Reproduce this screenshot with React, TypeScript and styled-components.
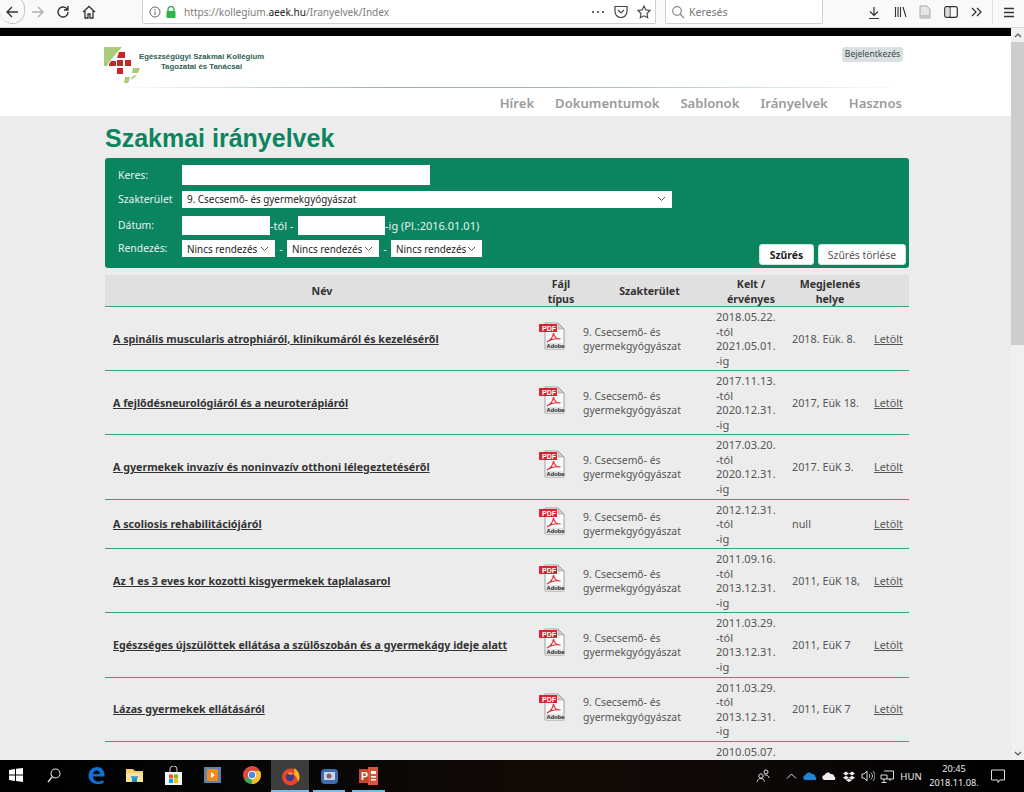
import React from "react";
import styled, { createGlobalStyle } from "styled-components";

const Global = createGlobalStyle`
  html, body { margin: 0; padding: 0; height: 100%; overflow: hidden; background: #ececec; }
  body { font-family: "Noto Sans", "Open Sans", "Liberation Sans", sans-serif; color: #333; }
  * { box-sizing: border-box; }
`;

const Screen = styled.div`
  width: 1024px; height: 792px; display: flex; flex-direction: column; overflow: hidden;
`;

/* ---------- browser toolbar ---------- */
const Toolbar = styled.div`
  height: 28px; flex: none; display: flex; align-items: flex-start; background: #f9f9fa;
  border-bottom: 1px solid #d8d8d8;
`;
const NavGroup = styled.div`
  width: 142px; height: 24px; flex: none; display: flex; align-items: center;
`;
const BackCircle = styled.span`
  width: 25px; height: 27px; margin-top: -3px; flex: none; display: flex; align-items: center; justify-content: center;
  border: 1px solid #c4c4c4; border-left: none; border-top: none; border-radius: 0 0 14px 14px / 0 0 14px 14px;
  border-top-right-radius: 12px; background: #f9f9fa; padding-top: 3px;
`;
const ToolSlot = styled.span<{ $w: number }>`
  width: ${(p) => p.$w}px; height: 24px; flex: none; display: flex; align-items: center; justify-content: center;
`;
const UrlBar = styled.div`
  width: 514px; height: 24px; flex: none; display: flex; align-items: center; background: #fff;
  border: 1px solid #cfcfcf; border-top: none; border-radius: 0 0 2px 2px; padding-left: 4px;
`;
const UrlText = styled.span`
  font-size: 10.1px; color: #7d7d7d; margin-left: 5px; flex: 1; white-space: nowrap;
  b { font-weight: 400; color: #222; }
`;
const SearchBar = styled.div`
  width: 158px; height: 24px; margin-left: 9px; flex: none; display: flex; align-items: center; gap: 4px; padding-left: 5px;
  background: #fff; border: 1px solid #cfcfcf; border-top: none; border-radius: 0 0 2px 2px;
  font-size: 10.5px; color: #777;
`;
const RightTools = styled.div`
  margin-left: 38px; display: flex; align-items: center; height: 24px;
`;
const ToolDivider = styled.span`
  width: 1px; height: 24px; background: #e0e0e0; margin: 0 5px 0 2px;
`;

/* ---------- page shell ---------- */
const Viewport = styled.div`
  flex: 1; min-height: 0; display: flex; overflow: hidden;
`;
const PageArea = styled.div`
  flex: 1; min-width: 0; display: flex; flex-direction: column; overflow: hidden; background: #ececec;
`;
const BlackBar = styled.div`
  height: 8px; flex: none; background: #000;
`;
const Scrollbar = styled.div`
  width: 13px; flex: none; background: #f0f0f0; display: flex; flex-direction: column; align-items: center; position: relative;
`;
const ScrollArrow = styled.span`
  height: 14px; flex: none; display: flex; align-items: center; justify-content: center; width: 100%;
`;
const ScrollThumb = styled.span`
  width: 100%; height: 303px; background: #cdcdcd; flex: none;
`;
const ScrollSpacer = styled.span`
  flex: 1;
`;

/* ---------- site header ---------- */
const Header = styled.header`
  height: 80px; flex: none; background: #fff; position: relative; padding: 11px 108px 0 104px;
`;
const HeaderTop = styled.div`
  display: flex; justify-content: space-between; align-items: flex-start; height: 40px;
`;
const Brand = styled.div`
  display: flex; align-items: flex-start; gap: 0;
  svg { flex: none; }
`;
const BrandText = styled.div`
  width: 125px; margin-left: -1px; margin-top: 5px; text-align: center; font-family: "Liberation Sans", sans-serif;
  font-weight: 700; font-size: 7.8px; line-height: 10px; color: #2f6152; white-space: nowrap;
`;
const LoginButton = styled.span`
  background: #d8e0e2; border-radius: 3px; font-size: 8.6px; line-height: 15px; height: 15px;
  color: #444; width: 61px; flex: none; text-align: center; white-space: nowrap;
`;
const HeaderRule = styled.div`
  height: 1px; margin-left: 11px; margin-right: -4px;
  background: linear-gradient(90deg, #fff 0%, #8fb7a2 35%, #9dc2ad 60%, #fff 100%);
`;
const Nav = styled.nav`
  display: flex; justify-content: flex-end; gap: 21px; margin-top: 5px; margin-right: 1px;
`;
const NavLink = styled.a`
  font-size: 13.1px; font-weight: 600; line-height: 20px; color: #9a9a9a; white-space: nowrap;
`;

/* ---------- main ---------- */
const Main = styled.main`
  flex: 1; min-height: 0; overflow: hidden; padding: 0 102px 0 105px;
`;
const Title = styled.h1`
  margin: 7px 0 0; height: 35px; font-family: "Liberation Sans", sans-serif; font-weight: 700; font-size: 25px;
  line-height: 31px; color: #0b8560; white-space: nowrap;
`;
const FilterPanel = styled.form`
  height: 110px; background: #0a8560; border-radius: 3px; padding: 7px 3px 3px 13px; display: flex; flex-direction: column; gap: 3px;
  color: #e6f3ee; font-size: 10.4px;
`;
const FilterRow = styled.div<{ $h: number }>`
  display: flex; align-items: center; height: ${(p) => p.$h}px; flex: none;
`;
const SortRow = styled(FilterRow)`
  align-items: flex-start; flex: 1;
`;
const FilterLabel = styled.label`
  width: 64px; flex: none; line-height: 17px; white-space: nowrap;
`;
const TextBox = styled.input<{ $w: number; $h?: number }>`
  width: ${(p) => p.$w}px; height: ${(p) => p.$h ?? 19}px; border: none; background: #fff; padding: 0; flex: none;
`;
const chevron = `url("data:image/svg+xml,%3Csvg xmlns='http://www.w3.org/2000/svg' width='9' height='6'%3E%3Cpath d='M1 1l3.5 3.5L8 1' fill='none' stroke='%23555' stroke-width='1'/%3E%3C/svg%3E")`;
const Select = styled.select<{ $w: number }>`
  appearance: none; width: ${(p) => p.$w}px; height: 17px; border: none; border-radius: 0; padding: 0 0 0 5px; flex: none;
  font-family: inherit; font-size: 9.9px; color: #222; background: #fff ${chevron} no-repeat right 6px center;
`;
const Sep = styled.span`
  width: 12px; text-align: center; flex: none; font-size: 11px; line-height: 17px;
`;
const RangeText = styled.span`
  font-size: 11px; white-space: nowrap;
`;
const FromText = styled(RangeText)`
  width: 28px; flex: none;
`;
const ButtonGroup = styled.div`
  margin-left: auto; margin-top: 4px; display: flex; gap: 4px;
`;
const Btn = styled.button<{ $primary?: boolean; $w: number }>`
  width: ${(p) => p.$w}px; height: 21px; padding: 0; background: #fff; border: 1px solid #cfe6dd; border-radius: 3px;
  font-family: inherit; font-size: 10.4px; font-weight: ${(p) => (p.$primary ? 700 : 400)}; color: ${(p) => (p.$primary ? "#222" : "#555")};
`;

/* ---------- table ---------- */
const cols = "434px 44px 133px 76px 82px 35px";
const TableHead = styled.div`
  margin-top: 7px; display: grid; grid-template-columns: ${cols}; height: 32px; background: #e0e0e0; border-bottom: 1px solid #3fa080;
  align-items: center; padding-top: 2px;
`;
const Th = styled.div<{ $pr?: number }>`
  text-align: center; font-weight: 700; font-size: 10.6px; line-height: 14.5px; color: #333; padding-right: ${(p) => p.$pr ?? 0}px;
`;
const Row = styled.div`
  display: grid; grid-template-columns: ${cols}; align-items: center; padding: 3px 0 2px; border-bottom: 1px solid #3fa080;
  font-size: 10.8px; line-height: 14.55px; color: #555;
`;
const ClippedRow = styled(Row)`
  border-bottom: none; min-height: 64px;
`;
const NameLink = styled.a`
  padding-left: 8px; font-weight: 700; color: #333; text-decoration: underline; font-size: 10.7px; white-space: nowrap;
`;
const FieldCell = styled.div`
  font-size: 10.4px;
`;
const DateCell = styled.div`
  font-size: 11.1px; color: #555;
`;
const TopDateCell = styled(DateCell)`
  grid-column: 4; grid-row: 1; align-self: start;
`;
const Download = styled.a`
  color: #555; text-decoration: underline;
`;
const IconCell = styled.div`
  display: flex; height: 29px; margin-top: -5px; grid-column: 2; grid-row: 1;
`;
const ClippedIconCell = styled(IconCell)`
  margin-top: 0;
`;

/* ---------- taskbar ---------- */
const Taskbar = styled.div`
  height: 32px; flex: none; display: flex; align-items: center; color: #e8e8e8;
  background: linear-gradient(90deg, #000 0%, #060606 25%, #120a06 55%, #0c0807 75%, #000 100%);
`;
const TaskSlot = styled.div<{ $w: number; $active?: boolean; $open?: boolean }>`
  width: ${(p) => p.$w}px; height: 32px; flex: none; display: flex; align-items: center; justify-content: center;
  background: ${(p) => (p.$active ? "#3d3d3d" : "transparent")};
  border-bottom: 2px solid ${(p) => (p.$open ? "#79bce9" : "transparent")};
  padding-top: ${(p) => (p.$open ? 2 : 0)}px;
`;
const TraySpacer = styled.div`
  flex: 1;
`;
const TraySlot = styled.div<{ $w: number }>`
  width: ${(p) => p.$w}px; height: 32px; flex: none; display: flex; align-items: center; justify-content: center;
`;
const LangText = styled.span`
  font-size: 9.6px; color: #e8e8e8;
`;
const Clock = styled.div`
  width: 60px; text-align: center; font-size: 9.2px; line-height: 14px; color: #eaeaea; flex: none; white-space: nowrap;
`;

/* ---------- icons ---------- */
const Ico = ({ w = 16, h = 16, children, vb }: { w?: number; h?: number; vb?: string; children: React.ReactNode }) => (
  <svg width={w} height={h} viewBox={vb ?? `0 0 ${w} ${h}`} fill="none">{children}</svg>
);

const PdfIcon = () => (
  <svg width="27" height="28" viewBox="0 0 27 28">
    <path d="M6 1h13l6 6v20H6z" fill="#fafafa" stroke="#8c8c8c" strokeWidth="0.8" />
    <path d="M19 1l6 6h-6z" fill="#cfcfcf" stroke="#8c8c8c" strokeWidth="0.5" />
    <path d="M0 2h18v8H0z" fill="#d9232e" />
    <text x="3" y="8.500" fontFamily="Liberation Sans, sans-serif" fontSize="7" fontWeight="700" fill="#fff">PDF</text>
    <path d="M8 20c3-1 6-5 6.500-9 .5 3.500 3 6 7 6-4-.5-10 .5-13.500 3z" fill="none" stroke="#d9232e" strokeWidth="1.100" />
    <rect x="6.500" y="21" width="18" height="6" fill="#e2e2e2" />
    <text x="7.500" y="26" fontFamily="Liberation Sans, sans-serif" fontSize="5.800" fontWeight="700" fill="#222">Adobe</text>
  </svg>
);

/* only the top edge of the last PDF icon is visible above the taskbar */
const PdfIconTop = () => (
  <svg width="27" height="28" viewBox="0 0 27 28">
    <path d="M6 1h13l6 6v20H6z" fill="#fafafa" stroke="#8c8c8c" strokeWidth="0.8" />
    <path d="M0 2h18v8H0z" fill="#d9232e" />
  </svg>
);

const LogoMark = () => (
  <svg width="36" height="37" viewBox="0 0 36 37">
    <path d="M0 0h18L5 15 3 19H0z" fill="#a9cb7a" />
    <path d="M15 5h6v6h-8z" fill="#c8242c" />
    <path d="M5 17l2-3h5v5H5z" fill="#c8242c" />
    <rect x="13" y="13" width="6" height="6" fill="#c8242c" />
    <rect x="21" y="13" width="6" height="6" fill="#c8242c" />
    <rect x="13" y="21" width="6" height="6" fill="#c8242c" />
    <path d="M29 21h7l-2 5h-6z" fill="#a9cb7a" />
    <path d="M33 27l-2 3-4 3 1-3z" fill="#a9cb7a" />
    <path d="M21 30h5l-1 4-1 2h-4z" fill="#a9cb7a" />
  </svg>
);

const ChromeIcon = () => (
  <svg width="18" height="18" viewBox="0 0 18 18">
    <circle cx="9" cy="9" r="9" fill="#dd4b3e" />
    <path d="M9 9L1.200 13.500A9 9 0 0 0 9 18c1 0 2-.2 3-.5z" fill="#3aa757" />
    <path d="M9 9l-.1 9A9 9 0 0 0 17 5H9z" fill="#f6c02f" />
    <circle cx="9" cy="9" r="4.200" fill="#fff" />
    <circle cx="9" cy="9" r="3.200" fill="#4a89e8" />
  </svg>
);

const FirefoxIcon = () => (
  <svg width="19" height="19" viewBox="0 0 19 19">
    <circle cx="9.500" cy="10" r="8.500" fill="#e8452c" />
    <path d="M13 1c3.500 2 5.500 5 5.500 9 0 2-.5 3.500-1.500 5-.3-3-1.500-5.500-4-7.500.5-2.500.5-4.500 0-6.500z" fill="#fcb524" />
    <circle cx="9" cy="10" r="4" fill="#3c3a8c" />
    <path d="M6 6c2-1.500 5-1 6.500 1l-3 1-3.500-2z" fill="#ff9a1f" />
  </svg>
);

const PptIcon = () => (
  <svg width="19" height="18" viewBox="0 0 19 18">
    <rect x="0" y="2" width="12" height="14" fill="#c8452a" />
    <rect x="9" y="0" width="10" height="18" fill="#d6573a" />
    <rect x="12" y="4" width="5" height="3" fill="#fff" />
    <rect x="12" y="9" width="5" height="1.500" fill="#fff" />
    <rect x="12" y="12" width="5" height="1.500" fill="#fff" />
    <text x="2" y="13" fontFamily="Liberation Sans, sans-serif" fontSize="10.500" fontWeight="700" fill="#fff">P</text>
  </svg>
);

type Doc = { name: string; from: string; to: string; place: string };
const docs: Doc[] = [
  { name: "A spinális muscularis atrophiáról, klinikumáról és kezeléséről", from: "2018.05.22.", to: "2021.05.01.", place: "2018. Eük. 8." },
  { name: "A fejlődésneurológiáról és a neuroterápiáról", from: "2017.11.13.", to: "2020.12.31.", place: "2017, Eük 18." },
  { name: "A gyermekek invazív és noninvazív otthoni lélegeztetéséről", from: "2017.03.20.", to: "2020.12.31.", place: "2017. EüK 3." },
  { name: "A scoliosis rehabilitációjáról", from: "2012.12.31.", to: "", place: "null" },
  { name: "Az 1 es 3 eves kor kozotti kisgyermekek taplalasarol", from: "2011.09.16.", to: "2013.12.31.", place: "2011, EüK 18," },
  { name: "Egészséges újszülöttek ellátása a szülőszobán és a gyermekágy ideje alatt", from: "2011.03.29.", to: "2013.12.31.", place: "2011, EüK 7" },
  { name: "Lázas gyermekek ellátásáról", from: "2011.03.29.", to: "2013.12.31.", place: "2011, EüK 7" },
];

const DocRow = ({ d }: { d: Doc }) => (
  <Row>
    <NameLink>{d.name}</NameLink>
    <IconCell><PdfIcon /></IconCell>
    <FieldCell>9. Csecsemő- és<br />gyermekgyógyászat</FieldCell>
    <DateCell>
      {d.from}<br />-tól<br />{d.to ? <>{d.to}<br />-ig</> : "-ig"}
    </DateCell>
    <div>{d.place}</div>
    <Download>Letölt</Download>
  </Row>
);

export default function App() {
  return (
    <Screen>
      <Global />
      <Toolbar>
        <NavGroup>
          <BackCircle>
            <Ico w={14} h={14}><path d="M13 7H2M7 2L2 7l5 5" stroke="#333" strokeWidth="1.400" /></Ico>
          </BackCircle>
          <ToolSlot $w={26}><Ico w={14} h={14}><path d="M1 7h11M7 2l5 5-5 5" stroke="#adadad" strokeWidth="1.300" /></Ico></ToolSlot>
          <ToolSlot $w={24}><Ico w={14} h={14}><path d="M12 7a5 5 0 1 1-1.600-3.700L12 5M12 1v4H8" stroke="#333" strokeWidth="1.400" /></Ico></ToolSlot>
          <ToolSlot $w={28}><Ico w={14} h={14}><path d="M1 7l6-5.500L13 7M3 6v7h3V9h2v4h3V6" stroke="#333" strokeWidth="1.300" /></Ico></ToolSlot>
        </NavGroup>
        <UrlBar>
          <ToolSlot $w={16}><Ico w={12} h={12}><circle cx="6" cy="6" r="5" stroke="#666" /><path d="M6 5.500V9M6 3v1.300" stroke="#666" /></Ico></ToolSlot>
          <ToolSlot $w={16}><Ico w={12} h={12}><path d="M3 5V3.500a3 3 0 0 1 6 0V5" stroke="#2fb344" strokeWidth="1.400" /><rect x="1.500" y="5" width="9" height="7" rx="1" fill="#2fb344" /></Ico></ToolSlot>
          <UrlText>https://kollegium.<b>aeek.hu</b>/Iranyelvek/Index</UrlText>
          <ToolSlot $w={22}><Ico w={14} h={4}><circle cx="2" cy="2" r="1.100" fill="#444" /><circle cx="7" cy="2" r="1.100" fill="#444" /><circle cx="12" cy="2" r="1.100" fill="#444" /></Ico></ToolSlot>
          <ToolSlot $w={24}><Ico w={14} h={13}><path d="M1 1.500h12v5a6 6 0 0 1-12 0z" stroke="#444" strokeWidth="1.200" /><path d="M4 5l3 3 3-3" stroke="#444" strokeWidth="1.200" /></Ico></ToolSlot>
          <ToolSlot $w={22}><Ico w={14} h={14}><path d="M7 1l1.900 3.900 4.100.6-3 3 .7 4.300L7 10.800l-3.700 2 .7-4.300-3-3 4.100-.6z" stroke="#444" strokeWidth="1.100" /></Ico></ToolSlot>
        </UrlBar>
        <SearchBar>
          <Ico w={14} h={14}><circle cx="6" cy="6" r="4.300" stroke="#888" strokeWidth="1.200" /><path d="M9 9l4 4" stroke="#888" strokeWidth="1.300" /></Ico>
          Keresés
        </SearchBar>
        <RightTools>
          <ToolSlot $w={26}><Ico w={12} h={13}><path d="M6 1v8M2 5.500L6 9.500l4-4M1 12.500h10" stroke="#333" strokeWidth="1.200" /></Ico></ToolSlot>
          <ToolSlot $w={26}><Ico w={13} h={12}><path d="M1.500 1v10M4 1v10M6.500 1v10M9 1l3 10" stroke="#333" strokeWidth="1.100" /></Ico></ToolSlot>
          <ToolSlot $w={24}><Ico w={12} h={14}><path d="M1 1h7l3 3v9H1z" fill="#e4e4e4" stroke="#aaa" /><rect x="1" y="10" width="10" height="3" fill="#c4c4c4" /></Ico></ToolSlot>
          <ToolSlot $w={27}><Ico w={14} h={12}><rect x=".7" y=".7" width="12.600" height="10.600" rx="2" stroke="#333" strokeWidth="1.200" /><path d="M6 1v10" stroke="#333" strokeWidth="1.200" /><rect x="2" y="2" width="3.500" height="8" fill="#ddd" /></Ico></ToolSlot>
          <ToolSlot $w={26}><Ico w={12} h={10}><path d="M1 1l4 4-4 4M6 1l4 4-4 4" stroke="#333" strokeWidth="1.300" /></Ico></ToolSlot>
          <ToolDivider />
          <ToolSlot $w={22}><Ico w={12} h={11}><path d="M1 1.500h10M1 5.500h10M1 9.500h10" stroke="#333" strokeWidth="1.300" /></Ico></ToolSlot>
        </RightTools>
      </Toolbar>

      <Viewport>
        <PageArea>
          <BlackBar />
          <Header>
            <HeaderTop>
              <Brand>
                <LogoMark />
                <BrandText>Egészségügyi Szakmai Kollégium<br />Tagozatai és Tanácsai</BrandText>
              </Brand>
              <LoginButton>Bejelentkezés</LoginButton>
            </HeaderTop>
            <HeaderRule />
            <Nav>
              <NavLink>Hírek</NavLink>
              <NavLink>Dokumentumok</NavLink>
              <NavLink>Sablonok</NavLink>
              <NavLink>Irányelvek</NavLink>
              <NavLink>Hasznos</NavLink>
            </Nav>
          </Header>
          <Main>
            <Title>Szakmai irányelvek</Title>
            <FilterPanel>
              <FilterRow $h={20}>
                <FilterLabel>Keres:</FilterLabel>
                <TextBox $w={248} $h={20} />
              </FilterRow>
              <FilterRow $h={22}>
                <FilterLabel>Szakterület</FilterLabel>
                <Select $w={490} defaultValue="9"><option value="9">9. Csecsemő- és gyermekgyógyászat</option></Select>
              </FilterRow>
              <FilterRow $h={24}>
                <FilterLabel>Dátum:</FilterLabel>
                <TextBox $w={88} />
                <FromText>-tól -</FromText>
                <TextBox $w={87} />
                <RangeText>-ig (Pl.:2016.01.01)</RangeText>
              </FilterRow>
              <SortRow $h={25}>
                <FilterLabel>Rendezés:</FilterLabel>
                <Select $w={93}><option>Nincs rendezés</option></Select>
                <Sep>-</Sep>
                <Select $w={92}><option>Nincs rendezés</option></Select>
                <Sep>-</Sep>
                <Select $w={91}><option>Nincs rendezés</option></Select>
                <ButtonGroup>
                  <Btn type="button" $primary $w={55}>Szűrés</Btn>
                  <Btn type="button" $w={88}>Szűrés törlése</Btn>
                </ButtonGroup>
              </SortRow>
            </FilterPanel>
            <TableHead>
              <Th>Név</Th>
              <Th>Fájl<br />típus</Th>
              <Th>Szakterület</Th>
              <Th $pr={6}>Kelt /<br />érvényes</Th>
              <Th $pr={6}>Megjelenés<br />helye</Th>
              <Th />
            </TableHead>
            {docs.map((d) => <DocRow key={d.name} d={d} />)}
            <ClippedRow>
              <ClippedIconCell><PdfIconTop /></ClippedIconCell>
              <TopDateCell>2010.05.07.</TopDateCell>
            </ClippedRow>
          </Main>
        </PageArea>
        <Scrollbar>
          <ScrollArrow><Ico w={8} h={5}><path d="M1 4l3-3 3 3" stroke="#555" strokeWidth="1.200" /></Ico></ScrollArrow>
          <ScrollThumb />
          <ScrollSpacer />
          <ScrollArrow><Ico w={8} h={5}><path d="M1 1l3 3 3-3" stroke="#555" strokeWidth="1.200" /></Ico></ScrollArrow>
        </Scrollbar>
      </Viewport>

      <Taskbar>
        <TaskSlot $w={31}><Ico w={14} h={14}><path d="M0 2l6-1v5.500H0zM7 .8L14 0v6.500H7zM0 7.500h6V13l-6-1zM7 7.500h7V14l-7-1z" fill="#fff" /></Ico></TaskSlot>
        <TaskSlot $w={46}><Ico w={14} h={15}><circle cx="8.500" cy="5.500" r="4.500" stroke="#ddd" strokeWidth="1.100" /><path d="M5 9l-4 5" stroke="#ddd" strokeWidth="1.400" /></Ico></TaskSlot>
        <TaskSlot $w={38}><Ico w={17} h={17}><path d="M16.500 9.500H5c.2 3 2.500 5 5.500 5 2 0 3.800-.6 5-1.500v3c-1.500.8-3.400 1.200-5.500 1.200C4.500 17 .5 13.800.5 8.500.5 3.500 4.500 0 9 0c4.800 0 7.800 3.400 7.500 9.500zM5.200 7h6.600c0-2-1.200-3.500-3.100-3.500S5.500 5 5.200 7z" fill="#0f6fd4" /></Ico></TaskSlot>
        <TaskSlot $w={39}><Ico w={17} h={15}><path d="M0 1h7l2 2h8v11H0z" fill="#f3cf6a" /><rect x="0" y="5" width="17" height="9" fill="#fbe29a" /><rect x="5" y="8" width="7" height="2" fill="#3fa9d8" /><rect x="6" y="10" width="5" height="4" fill="#2a8bc4" /></Ico></TaskSlot>
        <TaskSlot $w={39}><Ico w={19} h={19}><path d="M1 6h17v13H1z" fill="#f4f4f4" /><path d="M6 6V3a3.500 3 0 0 1 7 0v3" stroke="#ccc" /><rect x="5" y="8.500" width="4" height="4" fill="#f25022" /><rect x="10" y="8.500" width="4" height="4" fill="#7fba00" /><rect x="5" y="13" width="4" height="4" fill="#00a4ef" /><rect x="10" y="13" width="4" height="4" fill="#ffb900" /></Ico></TaskSlot>
        <TaskSlot $w={39}><Ico w={17} h={16}><rect x="0" y="0" width="17" height="16" fill="#5d86a8" /><rect x="3" y="2" width="11" height="12" fill="#f28a1e" /><path d="M7 5l4 3-4 3z" fill="#fff" /></Ico></TaskSlot>
        <TaskSlot $w={39}><ChromeIcon /></TaskSlot>
        <TaskSlot $w={38} $active $open><FirefoxIcon /></TaskSlot>
        <TaskSlot $w={4} />
        <TaskSlot $w={32} $open><Ico w={17} h={17}><rect x="0" y="1" width="17" height="15" rx="4" fill="#3d6cb0" /><rect x="3" y="4" width="11" height="8" fill="#c9d6ea" /><circle cx="8" cy="8" r="2.500" fill="#8a5a68" /></Ico></TaskSlot>
        <TaskSlot $w={7} />
        <TaskSlot $w={33} $open><PptIcon /></TaskSlot>
        <TraySpacer />
        <TraySlot $w={26}><Ico w={14} h={14}><circle cx="5" cy="7" r="2.200" stroke="#ddd" /><path d="M1 13c.5-2.500 2-3.500 4-3.500s3 1 3.500 3" stroke="#ddd" /><circle cx="10" cy="3" r="2" stroke="#ddd" /><path d="M8.500 6c2-.5 4 .5 4.500 3" stroke="#ddd" /></Ico></TraySlot>
        <TraySlot $w={5} />
        <TraySlot $w={20}><Ico w={11} h={6}><path d="M1 5.500l4.500-4.500 4.500 4.500" stroke="#ddd" /></Ico></TraySlot>
        <TraySlot $w={18}><Ico w={14} h={8}><path d="M3 8a2.500 2.500 0 0 1-.5-5C3.500.5 7-.5 8.500 2 11 1.500 12.500 3 12 4.500c1.500 0 2 3.500 0 3.500z" fill="#1e88d6" /></Ico></TraySlot>
        <TraySlot $w={20}><Ico w={14} h={8}><path d="M3 8a2.500 2.500 0 0 1-.5-5C3.500.5 7-.5 8.500 2 11 1.500 12.500 3 12 4.500c1.500 0 2 3.500 0 3.500z" fill="#eee" /></Ico></TraySlot>
        <TraySlot $w={20}><Ico w={12} h={11}><path d="M3 .5L6 2.500 3 4.500 0 2.500zM9 .5l3 2-3 2-3-2zM3 4.800l3 2-3 2-3-2zM9 4.800l3 2-3 2-3-2zM3 9.300l3-1.800 3 1.800-3 1.700z" fill="#eee" /></Ico></TraySlot>
        <TraySlot $w={18}><Ico w={14} h={12}><path d="M1 4h2l3-3v10L3 8H1z" stroke="#ddd" /><path d="M8 4c1 1 1 3 0 4M10 2.500c2 2 2 5 0 7M12 1c2.500 3 2.500 7 0 10" stroke="#ddd" strokeWidth=".8" /></Ico></TraySlot>
        <TraySlot $w={20}><Ico w={14} h={13}><path d="M4 1h9.500v8H7M1 5h6v4H1zM4 9v3M1.500 12.500h5M10 9v2" stroke="#ddd" /></Ico></TraySlot>
        <TraySlot $w={1} />
        <TraySlot $w={26}><LangText>HUN</LangText></TraySlot>
        <Clock>20:45<br />2018.11.08.</Clock>
        <TraySlot $w={7} />
        <TraySlot $w={14}><Ico w={14} h={14}><path d="M.5 1h13v10H9l-2 2.500V11H.5z" stroke="#ddd" /></Ico></TraySlot>
        <TraySlot $w={19} />
      </Taskbar>
    </Screen>
  );
}
